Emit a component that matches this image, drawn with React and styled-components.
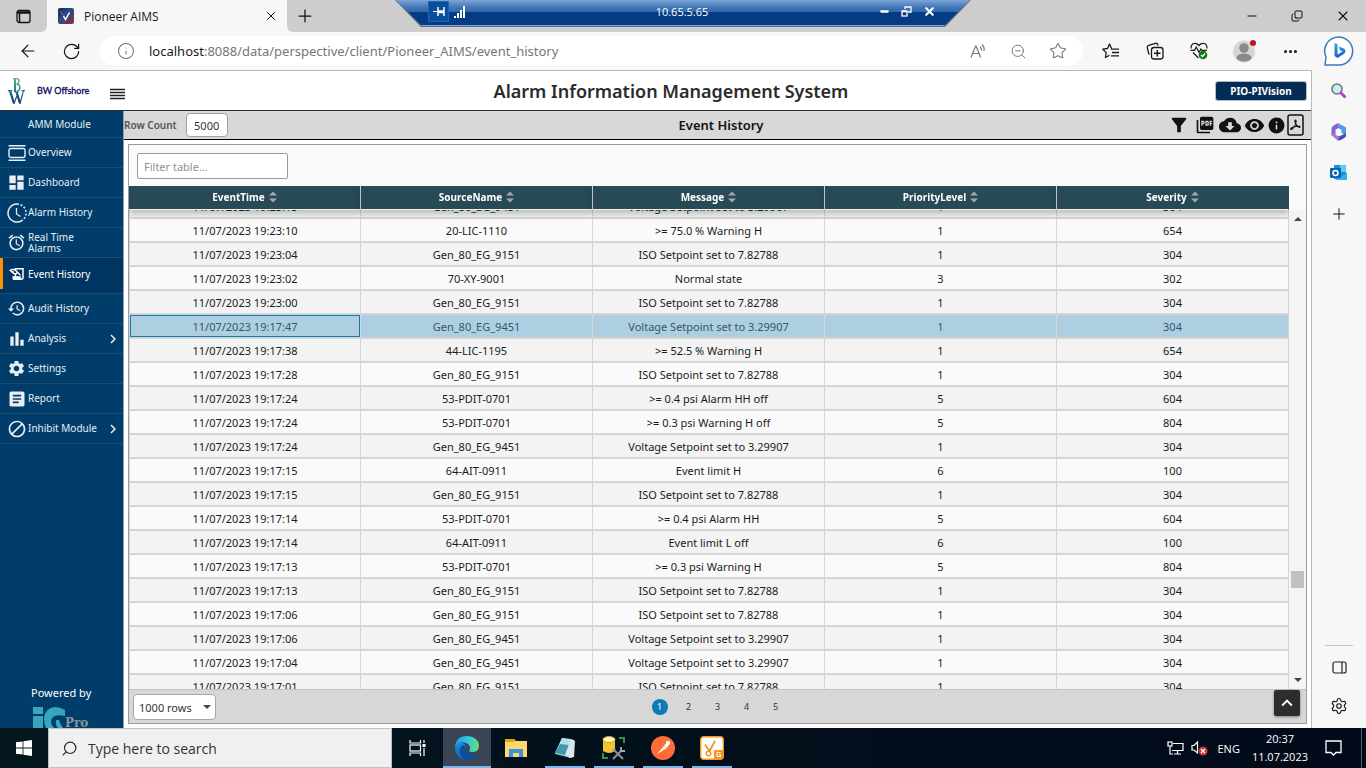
import React, { useLayoutEffect, useRef } from "react";
import styled, { createGlobalStyle, css } from "styled-components";
import {
  ArrowLeft, RotateCw, X, Plus, Minus, Star, ZoomOut, Ellipsis, Info, Search, Settings as Cog, Copy,
} from "lucide-react";
import {
  MdDashboard, MdAlarm, MdHistoryEdu, MdHistory, MdBarChart, MdSettings, MdArticle, MdBlock, MdChevronRight,
  MdFilterAlt, MdPictureAsPdf, MdCloudDownload, MdVisibility, MdInfo, MdKeyboardArrowUp,
} from "react-icons/md";

const ui = `"Open Sans", "Noto Sans", sans-serif`;
const app = `"Noto Sans", "Open Sans", sans-serif`;

const Global = createGlobalStyle`
  *, *::before, *::after { box-sizing: border-box; }
  body { margin: 0; background: #fff; font-family: ${app}; }
  button, input, select { font: inherit; color: inherit; margin: 0; }
  button { border: 0; background: none; padding: 0; cursor: pointer; }
  svg { display: block; flex: none; }
  a { color: inherit; text-decoration: none; }
`;

const Desktop = styled.div`
  display: flex;
  flex-direction: column;
  height: 100vh;
  overflow: hidden;
`;

/* ---------- Browser ---------- */
const TabStrip = styled.div`
  position: relative;
  display: flex;
  flex: none;
  height: 32px;
  background: #f7f7f7;
  font-family: ${ui};
  color: #1b1b1b;
`;
const StripStart = styled.div`
  width: 47px;
  display: grid;
  place-items: center;
  background: #cdcdcd;
  border-radius: 0 0 6px 0;
`;
const Tab = styled.div`
  width: 240px;
  display: flex;
  align-items: center;
  gap: 10px;
  padding: 0 9px 0 11px;
  background: #f7f7f7;
  border-radius: 6px 6px 0 0;
  font-size: 12px;
`;
const TabTitle = styled.span`
  flex: 1;
`;
const StripRest = styled.div`
  flex: 1;
  display: flex;
  align-items: center;
  justify-content: space-between;
  padding: 0 15px 0 8px;
  background: #cdcdcd;
  border-radius: 0 0 0 6px;
`;
const WindowButtons = styled.div`
  display: flex;
  align-items: center;
  gap: 32px;
`;
const IconButton = styled.button`
  display: grid;
  place-items: center;
  width: ${(p) => (p.$w ? `${p.$w}px` : "auto")};
  color: ${(p) => p.$color || "#111"};
`;
const RemoteBar = styled.div`
  position: absolute;
  top: 0;
  left: 50%;
  width: 576px;
  height: 27px;
  transform: translateX(-50%);
  background: #5c6b80;
  clip-path: polygon(0 0, 100% 0, calc(100% - 26px) 100%, 26px 100%);
  color: #fff;
`;
const RemoteFill = styled.div`
  display: grid;
  grid-template-columns: 1fr auto 1fr;
  align-items: center;
  height: 26px;
  padding: 0 35px 2px 33px;
  border-bottom: 1px solid #7fa3d8;
  clip-path: polygon(1px 0, calc(100% - 1px) 0, calc(100% - 27px) 100%, 27px 100%);
  background: linear-gradient(#7ba5d8 0, #5d8cc4 4px, #3d74b4 8px, #3069ad 12px, #053b82 12px, #053b82 100%);
  font-size: 11px;
`;
const RemoteGroup = styled.div`
  display: flex;
  align-items: center;
  justify-content: ${(p) => (p.$end ? "flex-end" : "flex-start")};
  gap: ${(p) => (p.$end ? "11px" : "5px")};
`;
const PinButton = styled.button`
  width: 21px;
  height: 21px;
  display: grid;
  place-items: center;
  background: #0a4f9e;
  border: 1px solid #1c64b8;
`;

const Toolbar = styled.div`
  display: flex;
  align-items: center;
  flex: none;
  height: 38px;
  padding: 0 11px 0 18px;
  background: #f7f7f7;
  font-family: ${app};
`;
const NavButtons = styled.div`
  display: flex;
  gap: 24px;
  width: 82px;
`;
const AddressBar = styled.div`
  flex: 1;
  display: flex;
  align-items: center;
  gap: 14px;
  height: 30px;
  padding: 0 16px 0 17px;
  border-radius: 15px;
  background: #fff;
  color: #767676;
`;
const AddressText = styled.div`
  flex: 1;
  font-size: 13px;
  b { font-weight: 400; color: #1b1b1b; }
`;
const AddressTools = styled.div`
  display: flex;
  align-items: center;
  gap: 22px;
`;
const BrowserTools = styled.div`
  display: flex;
  align-items: center;
  gap: 24px;
  padding-left: 18px;
`;
const ToolSlot = styled.button`
  width: ${(p) => p.$w || 20}px;
  display: grid;
  place-items: center;
  color: #1b1b1b;
`;

const Main = styled.div`
  display: flex;
  flex: 1;
  min-height: 0;
`;
const EdgeSidebar = styled.aside`
  flex: none;
  width: 54px;
  display: flex;
  flex-direction: column;
  align-items: center;
  gap: 23px;
  padding: 12px 0 13px;
  background: #f7f7f7;
`;
const EdgeSpacer = styled.div`
  flex: 1;
`;
const EdgeRule = styled.div`
  width: 28px;
  height: 1px;
  background: #c4c4c4;
  margin-bottom: -8px;
`;

/* ---------- Application ---------- */
const Page = styled.div`
  flex: 1;
  min-width: 0;
  display: flex;
  flex-direction: column;
  background: #fff;
  border-top: 1px solid #b9b9b9;
  border-right: 1px solid #b9b9b9;
`;
const AppHeader = styled.header`
  flex: none;
  display: grid;
  grid-template-columns: 1fr auto 1fr;
  align-items: center;
  height: 40px;
  padding: 0 4px 0 7px;
  border-bottom: 1px solid #2e2e2e;
  h1 { margin: 0; padding-left: 28px; font-size: 18px; line-height: 24px; font-weight: 600; color: #2b2b2b; }
`;
const Brand = styled.div`
  display: flex;
  align-items: center;
  gap: 11px;
`;
const BrandName = styled.span`
  width: 62px;
  color: #0d0d5c;
  font: 9px/14px Lato, sans-serif;
  -webkit-text-stroke: 0.3px #0d0d5c;
`;
const MenuButton = styled(IconButton)`
  padding-top: 6px;
`;
const VisionButton = styled.button`
  justify-self: end;
  width: 92px;
  height: 20px;
  border-radius: 3px;
  border: 1px solid #b4bcc6;
  background: #042c55;
  color: #fff;
  font-size: 10px;
  line-height: 16px;
  font-weight: 700;
`;
const AppBody = styled.div`
  flex: 1;
  min-height: 0;
  display: flex;
`;
const Nav = styled.nav`
  flex: none;
  width: 124px;
  display: flex;
  flex-direction: column;
  overflow: hidden;
  background: #013d6a;
  border-right: 1px solid #8aa0b0;
  color: #e8eef2;
  font-size: 10px;
  line-height: 11px;
`;
const NavTitle = styled.div`
  height: 27px;
  padding: 8px 0 0 28px;
  border-bottom: 1px solid #1d4d6c;
`;
const NavItem = styled.a`
  display: flex;
  align-items: center;
  flex: none;
  height: 30px;
  gap: 2px;
  padding: 0 1px 0 7px;
  border-bottom: 1px solid #1d4d6c;
  ${(p) => p.$active && css`
    height: 36px;
    padding-bottom: 3px;
    background: linear-gradient(#ff9100, #ff9100) 0 0 / 3px 31px no-repeat #003561;
    color: #fff;
  `}
`;
const NavIcon = styled.span`
  width: 19px;
  display: grid;
  place-items: center;
`;
const NavLabel = styled.span`
  width: 72px;
  margin-right: auto;
`;
const NavFooter = styled.div`
  margin-top: auto;
  padding-left: 31px;
  color: #fff;
  font-size: 11px;
  line-height: 16px;
  svg { margin-top: 6px; }
`;
const Content = styled.main`
  flex: 1;
  min-width: 0;
  display: flex;
  flex-direction: column;
`;
const SubHeader = styled.div`
  flex: none;
  display: grid;
  grid-template-columns: 1fr auto 1fr;
  align-items: center;
  height: 29px;
  padding-right: 7px;
  background: #d8d8d8;
  border-bottom: 1px solid #000;
  h2 { margin: 0; padding-left: 14px; font-size: 13px; line-height: 18px; font-weight: 600; color: #111; }
`;
const RowCount = styled.label`
  display: flex;
  align-items: center;
  gap: 9px;
  font-size: 10px;
  font-weight: 600;
  color: #555;
  input {
    width: 42px;
    height: 24px;
    padding: 0;
    text-align: center;
    border: 1px solid #a0a0a0;
    border-radius: 4px;
    background: #fff;
    color: #333;
    font-size: 11px;
    font-weight: 400;
  }
`;
const Actions = styled.div`
  display: flex;
  align-items: center;
  justify-content: flex-end;
  gap: 2px;
`;
const Panel = styled.section`
  flex: 1;
  min-height: 0;
  display: flex;
  flex-direction: column;
  margin: 4px;
  border: 1px solid #9b9b9b;
  background: #fafafa;
`;
const FilterRow = styled.div`
  flex: none;
  padding: 8px 8px 7px;
  input {
    display: block;
    width: 151px;
    height: 26px;
    padding: 0 6px;
    border: 1px solid #9b9b9b;
    border-radius: 2px;
    background: #fff;
    font-size: 11px;
    &::placeholder { color: #919191; opacity: 1; }
  }
`;
const TableArea = styled.div`
  flex: 1;
  min-height: 0;
  display: flex;
  background: #fafafa;
`;
const Scroller = styled.div`
  flex: 1;
  min-width: 0;
  overflow: hidden;
`;
const Table = styled.table`
  width: 100%;
  table-layout: fixed;
  border-collapse: separate;
  border-spacing: 0;
  font-size: 11px;
  line-height: 16px;
  color: #1a1a1a;
  text-align: center;
`;
const Th = styled.th`
  position: sticky;
  top: 0;
  height: 24px;
  padding: 0 0 1px;
  background: #274a56;
  color: #fff;
  font-size: 10px;
  font-weight: 700;
  line-height: 14px;
  border-right: 1px solid #d5d5d5;
  border-bottom: 1px solid #f0f0f0;
  box-shadow: 0 4px 6px rgba(0, 0, 0, 0.22);
  &:last-child { border-right-color: #274a56; }
`;
const SortLabel = styled.button`
  display: inline-flex;
  align-items: center;
  gap: 4px;
  vertical-align: top;
`;
const Row = styled.tr`
  background: ${(p) => (p.$selected ? "#aecfe2" : p.$odd ? "#f3f3f3" : "#fafafa")};
  color: ${(p) => (p.$selected ? "#35566b" : "#1a1a1a")};
`;
const Td = styled.td`
  height: 24px;
  padding: 2px 0 0;
  border-right: 1px solid #d5d5d5;
  border-bottom: 2px solid #d5d5d5;
  &:first-child { border-left: 1px solid #d5d5d5; }
`;
const FocusedTd = styled(Td)`
  box-shadow: inset 0 0 0 1px #0b7bb5;
`;
const ScrollTrack = styled.div`
  flex: none;
  width: 17px;
  display: flex;
  flex-direction: column;
  align-items: center;
  margin-top: 24px;
  padding: 7px 0;
  background: #f4f4f4;
`;
const ScrollGap = styled.div`
  flex: ${(p) => p.$grow};
`;
const ScrollThumb = styled.div`
  width: 13px;
  height: 17px;
  background: #c1c1c1;
`;
const Pager = styled.div`
  flex: none;
  display: grid;
  grid-template-columns: 1fr auto 1fr;
  align-items: center;
  height: 34px;
  padding: 0 6px 0 4px;
  background: #d7d7d7;
  border-top: 1px solid #c2c2c2;
`;
const SelectBox = styled.div`
  display: grid;
  width: 83px;
  align-items: center;
  & > * { grid-area: 1 / 1; }
  select {
    appearance: none;
    width: 100%;
    height: 26px;
    padding: 0 5px;
    border: 1px solid #a6a6a6;
    border-radius: 4px;
    background: #fff;
    color: #333;
    font-size: 11px;
  }
  svg { justify-self: end; margin-right: 5px; pointer-events: none; }
`;
const Pages = styled.div`
  display: flex;
  gap: 13px;
  padding-left: 2px;
`;
const PageButton = styled.button`
  width: 16px;
  height: 16px;
  border-radius: 50%;
  font-size: 9px;
  line-height: 16px;
  color: ${(p) => (p.$current ? "#fff" : "#333")};
  background: ${(p) => (p.$current ? "#0b7bb5" : "transparent")};
`;
const TopButton = styled.button`
  justify-self: end;
  width: 26px;
  height: 26px;
  display: grid;
  place-items: center;
  margin-bottom: 8px;
  border-radius: 2px;
  background: #2d2d30;
  color: #fff;
  box-shadow: 0 1px 3px rgba(0, 0, 0, 0.4);
`;

/* ---------- Taskbar ---------- */
const Taskbar = styled.footer`
  flex: none;
  display: flex;
  height: 40px;
  background: linear-gradient(90deg, #03161d, #020a1a);
  font-family: ${ui};
  color: #fff;
`;
const StartButton = styled.button`
  width: 48px;
  display: grid;
  place-items: center;
`;
const SearchBox = styled.label`
  width: 344px;
  display: flex;
  align-items: center;
  gap: 10px;
  padding: 0 12px;
  background: #f0f0f0;
  border: 1px solid #c0c0c0;
  color: #222;
  input {
    flex: 1;
    min-width: 0;
    border: 0;
    padding: 0;
    background: none;
    font-size: 14px;
    &::placeholder { color: #333; opacity: 1; }
  }
`;
const TaskIcons = styled.div`
  flex: 1;
  display: flex;
  gap: 1px;
`;
const TaskIcon = styled.button`
  width: ${(p) => p.$w || 48}px;
  display: grid;
  place-items: center;
  background: ${(p) => (p.$active ? "#3a4555" : "none")};
  background-image: ${(p) => (p.$running || p.$active ? "linear-gradient(#76b9ed, #76b9ed)" : "none")};
  background-repeat: no-repeat;
  background-position: bottom;
  background-size: ${(p) => (p.$active ? "48px" : "40px")} 2px;
`;
const Tray = styled.div`
  display: flex;
  align-items: center;
  font-size: 11px;
  padding-right: 4px;
`;
const TrayIcons = styled.div`
  display: flex;
  align-items: center;
  gap: 7px;
  margin-right: 9px;
`;
const Clock = styled.div`
  margin: 0 17px 0 12px;
  text-align: center;
  line-height: 18px;
`;
const TrayEnd = styled.div`
  height: 40px;
  margin-left: 19px;
  border-left: 1px solid #56606c;
`;

/* ---------- Drawings ---------- */
const TabsGlyph = () => (
  <svg width="15" height="15" viewBox="0 0 15 15" fill="none" stroke="#111" strokeWidth="1.3">
    <rect x="1" y="1.5" width="13" height="12" rx="2" /><path d="M1 3.500h13" strokeWidth="2.500" /><path d="M3.500 4v9" strokeWidth="1.500" />
  </svg>
);
const Favicon = () => (
  <svg width="16" height="16" viewBox="0 0 16 16">
    <defs><linearGradient id="fav" x2="1" y2="1"><stop stopColor="#0c2c55" /><stop offset=".45" stopColor="#28508a" /><stop offset=".7" stopColor="#5b3a5e" /><stop offset="1" stopColor="#a5301f" /></linearGradient></defs>
    <rect width="16" height="16" rx="2" fill="url(#fav)" /><path d="M5.500 8l2 3.500 4-7" fill="none" stroke="#fff" strokeWidth="1.500" />
    <path d="M2 3l3.500 4.500" stroke="#c9574e" />
  </svg>
);
const ReadAloud = () => (
  <svg width="18" height="16" viewBox="0 0 18 16" fill="none" stroke="currentColor" strokeWidth="1.200">
    <path d="M1 14.500L5.500 3h.6l4.500 11.500M2.700 10.500h6.200M10 3.500q1.700 1.500 1.500 4M12 1.500q2.700 2.500 2 6.500" />
  </svg>
);
const StarLines = () => (
  <svg width="18" height="16" viewBox="0 0 18 16" fill="none" stroke="currentColor" strokeWidth="1.300" strokeLinejoin="round">
    <path d="M9.500 5.500L7.500 1 5.500 5.500.8 6.200 4.200 9.600 3.400 14.500 7.500 12.200M9 6.200h8M10 9.500h7M9 12.800h8" />
  </svg>
);
const Collections = () => (
  <svg width="18" height="18" viewBox="0 0 18 18" fill="none" stroke="currentColor" strokeWidth="1.300">
    <path d="M3.500 12.500Q2.800 12 2.600 11L1.200 5.500Q1 4 2.500 3.300l7-2q1.700-.3 2.200 1.200l.3 1" /><rect x="5.500" y="5.500" width="11.500" height="11.500" rx="2.500" /><path d="M11.300 8v6.500M8 11.300h6.500" strokeWidth="1.500" />
  </svg>
);
const Heart = () => (
  <svg width="18" height="18" viewBox="0 0 18 18" fill="none" stroke="currentColor" strokeWidth="1.200">
    <path d="M1.200 6.500Q.5 3.500 3 1.800 6.500.5 9 3.500 11.500.5 15 1.800 17.500 3.500 16.800 6.500M.5 8.300h4l1.800-3.300 2.700 5.500 1.800-3.500 1.200 1.300H17M3 10.500l5.500 5.500" />
    <circle cx="13" cy="13" r="4.300" fill="#107c10" stroke="none" /><path d="M11 13l1.500 1.500 2.500-3" stroke="#fff" />
  </svg>
);
const Avatar = () => (
  <svg width="24" height="24" viewBox="0 0 24 24">
    <circle cx="11" cy="12.500" r="11" fill="#d8d6d4" /><circle cx="11" cy="9" r="4.800" fill="#8b8987" /><ellipse cx="11" cy="18.500" rx="7.500" ry="4" fill="#8b8987" /><circle cx="20" cy="4" r="3" fill="#c50f1f" />
  </svg>
);
const Bing = () => (
  <svg width="32" height="32" viewBox="0 0 32 32">
    <defs><linearGradient id="bing" x2="0" y2="1"><stop stopColor="#2cb5df" /><stop offset="1" stopColor="#2355c7" /></linearGradient></defs>
    <path d="M2 30l1-8A14 14 0 1 1 16 30Z" fill="#fff" stroke="#3c79bc" strokeWidth="1.500" strokeLinejoin="round" />
    <path d="M11.500 8l3 1v10.500l5-3-2.500-1.300-1.500-3.700 6 2.200q2 2.300 0 4.800l-7 4.500-3-2z" fill="url(#bing)" />
  </svg>
);
const SideSearch = () => (
  <svg width="18" height="18" viewBox="0 0 18 18"><path d="M10.500 10.500l5 5" stroke="#c43bdc" strokeWidth="3" /><circle cx="7" cy="7" r="5" fill="#cfe8f6" stroke="#6d7780" strokeWidth="1.600" /></svg>
);
const M365 = () => (
  <svg width="18" height="18" viewBox="0 0 18 18">
    <path d="M8 0l8 4.500v7.500l-4.500-2V7L9 5.500z" fill="#4f9be8" /><path d="M8 0Q2 3 1.500 5v7l4 2V6.500L9 5z" fill="#8a63d2" /><path d="M1.500 12L8 17.500q3 .5 8-4V10l-7 3.500-3.500-1z" fill="#4b4fb5" /><path d="M1.500 9v3L8 17l1.500-3.500L5.500 12z" fill="#a678de" />
  </svg>
);
const Outlook = () => (
  <svg width="18" height="18" viewBox="0 0 18 18">
    <rect x="4" y="1" width="12" height="14" rx="1" fill="#1b8ed8" /><rect x="10" y="1" width="6" height="7" fill="#5bcaf5" /><path d="M5 16l12-7v7z" fill="#2fb0ea" /><rect x="0" y="4" width="11" height="10" rx="1" fill="#0a62b8" /><circle cx="5.500" cy="9" r="2.500" fill="none" stroke="#fff" strokeWidth="1.500" />
  </svg>
);
const PanelGlyph = () => (
  <svg width="15" height="13" viewBox="0 0 15 13" fill="none" stroke="#222" strokeWidth="1.200"><rect x="1" y="1" width="13" height="11" rx="2" /><path d="M10 1v11" /></svg>
);
const BwLogo = () => (
  <svg width="19" height="28" viewBox="0 0 19 28">
    <defs><linearGradient id="bw" x2="0" y2="28" gradientUnits="userSpaceOnUse"><stop stopColor="#62b893" /><stop offset=".4" stopColor="#1f8a80" /><stop offset=".6" stopColor="#155b80" /><stop offset="1" stopColor="#1c2f78" /></linearGradient></defs>
    <g fill="none" stroke="url(#bw)">
      <path d="M8 1.500V15" strokeWidth="2" />
      <path d="M6 1.600h4q2.500.6 2 3-.4 1.800-2.500 2.400 3.500.4 3.500 3.800-.3 3-3.500 3.600" strokeWidth="1.300" />
      <path d="M.8 13.600h4.500M8 15.200h3.500M14.500 13.600h3.500" strokeWidth="1.100" />
      <path d="M3 13.600L7 26.500M9.800 15.500L13 26.500" strokeWidth="2.200" />
      <path d="M7 26.500l3-8M13 26.500l3.500-12.800" strokeWidth="1.100" />
    </g>
  </svg>
);
const MenuGlyph = () => (
  <svg width="15" height="12" viewBox="0 0 15 12" stroke="#222" strokeWidth="1.300"><path d="M0 1.500h15M0 4.500h15M0 7.500h15M0 10.500h15" /></svg>
);
const OverviewGlyph = () => (
  <svg width="18" height="18" viewBox="0 0 18 18" fill="none" stroke="currentColor" strokeWidth="1.400"><path d="M.5 1.700h17M.5 16.300h17" /><rect x="1" y="4.500" width="16" height="9" rx="2" /></svg>
);
const AlarmHistoryGlyph = () => (
  <svg width="20" height="20" viewBox="0 0 20 20" fill="none" stroke="currentColor" strokeWidth="1.500"><path d="M10 1a9 9 0 1 0 5 16.500" /><path d="M10 1a9 9 0 0 1 5 16.500" strokeDasharray="2 1.600" /><path d="M9.500 5v6l4 2.500" strokeWidth="1.300" /></svg>
);
const AcrobatGlyph = () => (
  <svg width="17" height="22" viewBox="0 0 17 22" fill="none" stroke="#111"><rect x="1" y="1" width="15" height="20" rx="2" strokeWidth="1.500" /><path d="M8.200 6q1.200 0 .9 2-.6 4.500-4.600 7.500-1.200.2-.6-1.200 3.500-2.500 8.600-2 1 .5.200 1.100Q10 13 8.200 8.500q-.7-2.300 0-2.500" strokeWidth="1.100" /></svg>
);
const IcProLogo = () => (
  <svg width="62" height="21" viewBox="0 0 62 21">
    <path d="M2 0h10v7H2zM2 9h10v12H2z" fill="#38a4bd" />
    <path d="M34 9V3Q29 0 24 0 14 1 13 11q0 6 2 10h8q-3-3-3-7 1-5 6-5.500Q30 8 34 9zM25 13q4-1 4 3l3 5h-5q-3-3-2-8z" fill="#38a4bd" />
    <text x="34" y="20" fontFamily="DejaVu Serif, serif" fontWeight="700" fontSize="12" fill="#8b9599">Pro</text>
  </svg>
);
const SortGlyph = () => (
  <svg width="8" height="12" viewBox="0 0 8 12" fill="#a3a9ac"><path d="M0 4.500L4 .5l4 4zM0 7.500l4 4 4-4z" /></svg>
);
const Caret = ({ up }) => (
  <svg width="8" height="4" viewBox="0 0 8 4" fill="#444"><path d={up ? "M0 4l4-4 4 4z" : "M0 0h8L4 4z"} /></svg>
);
const WindowsLogo = () => (
  <svg width="16" height="16" viewBox="0 0 16 16" fill="#fff"><path d="M0 2.300L6.600 1.400v6.200H0zM7.400 1.300L16 0v7.600H7.400zM0 8.400h6.600v6.200L0 13.700zM7.400 8.400H16V16l-8.600-1.300z" /></svg>
);
const TaskView = () => (
  <svg width="17" height="16" viewBox="0 0 17 16" fill="none" stroke="#fff" strokeWidth="1.200"><path d="M1 0v3h10.500V0M1 16v-3h10.500v3M15 0v3M15 8v8" /><rect x="1" y="5" width="10.500" height="6" /><rect x="14" y="4.500" width="2" height="2" fill="#fff" strokeWidth="1" /></svg>
);
const EdgeLogo = () => (
  <svg width="24" height="24" viewBox="0 0 24 24">
    <defs>
      <linearGradient id="eg1" x2="1"><stop stopColor="#1c9be0" /><stop offset=".6" stopColor="#36c8e0" /><stop offset="1" stopColor="#6be05e" /></linearGradient>
      <linearGradient id="eg2" x2="0" y2="1"><stop stopColor="#1b8ce0" /><stop offset="1" stopColor="#0f62b5" /></linearGradient>
    </defs>
    <path d="M0 11q0 6 3.500 9.500Q7 24 12 24q7 0 10.500-6-4 2.500-8.500.5-3.500-2-3.200-6Q11 7 6 6.500 1 7 0 11z" fill="url(#eg2)" />
    <path d="M8 9Q4 12 5 17q1.500 5 6 7 7 .5 11-5.500.4-.8-.5-.5-4 1.700-7.500.3-3.500-2-3.200-6.300Q10.500 9.500 8 9z" fill="#0c4f9a" />
    <path d="M0 11Q1 0 12 0q11 .5 12 9.500 0 6-6 6.500-4 0-4-1.500 2-2 0-5.500Q11 5.500 6 6.500 2 7.500 0 11z" fill="url(#eg1)" />
  </svg>
);
const Folder = () => (
  <svg width="22" height="19" viewBox="0 0 22 19"><path d="M0 0h9l2 2h11v16H0z" fill="#ffd86b" /><path d="M0 0h9l1 3H0z" fill="#e5a50a" /><path d="M4 18v-8h14v8h-4v-4H8v4z" fill="#3a94dd" /></svg>
);
const Notepad = () => (
  <svg width="24" height="24" viewBox="0 0 24 24"><path d="M9 2l12 2-3 18-16-4z" fill="#8cc8d6" /><path d="M9 2l9 1-6 16-10-2z" fill="#b5e0e8" /><path d="M7 8l9 1-4 10-10-2z" fill="#3e98ae" /><path d="M18 3l4 2-1 16-4 1-5-3z" fill="#dce6ea" /></svg>
);
const Database = () => (
  <svg width="24" height="24" viewBox="0 0 24 24"><path d="M1 3v12q6 4 12 0V3z" fill="#f5c32c" /><ellipse cx="7" cy="3.500" rx="6" ry="3" fill="#fff4c4" stroke="#d79c14" /><path d="M17 2h5v5M1 17v5h5" fill="none" stroke="#3c8f48" strokeWidth="2" /><path d="M12 14l9 9M20 14l-9 9" stroke="#8e9396" strokeWidth="2" /><path d="M19 11v4h4M10 15l3-3" stroke="#a6aaad" strokeWidth="1.800" fill="none" /></svg>
);
const Postman = () => (
  <svg width="24" height="24" viewBox="0 0 24 24"><circle cx="12" cy="12" r="12" fill="#ff6c37" /><path d="M6 18l7-8 2.500 2.200z" fill="#fff" /><path d="M13 9l3-1.500 1.500 2L15.500 12z" fill="#fff" /><circle cx="17" cy="7" r="2.200" fill="#fff" /></svg>
);
const Designer = () => (
  <svg width="24" height="24" viewBox="0 0 24 24"><rect x=".7" y=".7" width="22.600" height="22.600" rx="3" fill="#fff" stroke="#f7941d" strokeWidth="1.400" /><path d="M5 8.500l4.500 6.500L15 5" fill="none" stroke="#f7941d" strokeWidth="1.800" /><circle cx="8.500" cy="17.500" r="2.300" fill="#fff" stroke="#f7941d" strokeWidth="1.500" /><rect x="14" y="14" width="9" height="9" rx="1" fill="#f7941d" /><path d="M20.500 16.500h-3.500v4h3.500v-2h-1.500" fill="none" stroke="#fff" /></svg>
);
const Network = () => (
  <svg width="17" height="14" viewBox="0 0 17 14" fill="none" stroke="#fff" strokeWidth="1.200"><path d="M6 2.500h10v7H5M10.500 9.500v3.500M7 13h7M3 5.500V13h3" /><rect x="1" y="1" width="4" height="4" /></svg>
);
const Volume = () => (
  <svg width="17" height="15" viewBox="0 0 17 15" fill="none"><path d="M1 4.500h2L6.500 1v11L3 9H1z" stroke="#fff" strokeWidth="1.200" /><circle cx="12" cy="10" r="4.500" fill="#d13438" /><path d="M10 8l4 4M14 8l-4 4" stroke="#fff" strokeWidth="1.200" /></svg>
);
const Notifications = () => (
  <svg width="17" height="17" viewBox="0 0 17 17" fill="none" stroke="#fff" strokeWidth="1.300"><path d="M1 1h15v11.500h-5L8.500 15 6 12.500H1z" /></svg>
);
const Signal = () => (
  <svg width="12" height="12" viewBox="0 0 12 12" fill="#fff"><path d="M0 10h2v2H0zM3 7h2v5H3zM6 4h2v8H6zM9 0h2v12H9z" /></svg>
);
const Pin = () => (
  <svg width="12" height="9" viewBox="0 0 12 9" fill="none" stroke="#fff"><path d="M0 4.500h5" strokeWidth="1" /><path d="M5 0v9M11 0v9M5 4h6M5 5.500h6" strokeWidth="1.500" /></svg>
);
const RemoteRestore = () => (
  <svg width="11" height="11" viewBox="0 0 11 11" fill="none" stroke="#fff" strokeWidth="1.300"><path d="M4 3V1h6v5H7" /><rect x="1" y="5" width="5" height="5" /><path d="M1 5.500h5" /></svg>
);

/* ---------- Data ---------- */
const navItems = [
  ["Overview", <OverviewGlyph />],
  ["Dashboard", <MdDashboard size={19} />],
  ["Alarm History", <AlarmHistoryGlyph />],
  ["Real Time Alarms", <MdAlarm size={19} />],
  ["Event History", <MdHistoryEdu size={18} />],
  ["Audit History", <MdHistory size={19} />],
  ["Analysis", <MdBarChart size={20} />, true],
  ["Settings", <MdSettings size={19} />],
  ["Report", <MdArticle size={20} />],
  ["Inhibit Module", <MdBlock size={20} />, true],
];
const columns = ["EventTime", "SourceName", "Message", "PriorityLevel", "Severity"];
const V = "Voltage Setpoint set to 3.29907";
const I = "ISO Setpoint set to 7.82788";
const G4 = "Gen_80_EG_9451";
const G1 = "Gen_80_EG_9151";
const events = [
  ["19:23:13", G4, V, 1, 304],
  ["19:23:10", "20-LIC-1110", ">= 75.0 % Warning H", 1, 654],
  ["19:23:04", G1, I, 1, 304],
  ["19:23:02", "70-XY-9001", "Normal state", 3, 302],
  ["19:23:00", G1, I, 1, 304],
  ["19:17:47", G4, V, 1, 304],
  ["19:17:38", "44-LIC-1195", ">= 52.5 % Warning H", 1, 654],
  ["19:17:28", G1, I, 1, 304],
  ["19:17:24", "53-PDIT-0701", ">= 0.4 psi Alarm HH off", 5, 604],
  ["19:17:24", "53-PDIT-0701", ">= 0.3 psi Warning H off", 5, 804],
  ["19:17:24", G4, V, 1, 304],
  ["19:17:15", "64-AIT-0911", "Event limit H", 6, 100],
  ["19:17:15", G1, I, 1, 304],
  ["19:17:14", "53-PDIT-0701", ">= 0.4 psi Alarm HH", 5, 604],
  ["19:17:14", "64-AIT-0911", "Event limit L off", 6, 100],
  ["19:17:13", "53-PDIT-0701", ">= 0.3 psi Warning H", 5, 804],
  ["19:17:13", G1, I, 1, 304],
  ["19:17:06", G1, I, 1, 304],
  ["19:17:06", G4, V, 1, 304],
  ["19:17:04", G4, V, 1, 304],
  ["19:17:01", G1, I, 1, 304],
];
const selectedIndex = 5;

function Browser() {
  return (
    <>
      <TabStrip>
        <StripStart><IconButton aria-label="Tab actions"><TabsGlyph /></IconButton></StripStart>
        <Tab>
          <Favicon />
          <TabTitle>Pioneer AIMS</TabTitle>
          <IconButton aria-label="Close tab"><X size={14} strokeWidth={1.7} /></IconButton>
        </Tab>
        <StripRest>
          <IconButton aria-label="New tab"><Plus size={20} strokeWidth={1.5} /></IconButton>
          <WindowButtons>
            <IconButton aria-label="Minimize"><Minus size={14} strokeWidth={1.7} /></IconButton>
            <IconButton aria-label="Restore"><Copy size={12} strokeWidth={2} transform="scale(1 -1)" /></IconButton>
            <IconButton aria-label="Close"><X size={16} strokeWidth={1.7} /></IconButton>
          </WindowButtons>
        </StripRest>
        <RemoteBar>
          <RemoteFill>
            <RemoteGroup><PinButton aria-label="Pin"><Pin /></PinButton><Signal /></RemoteGroup>
            <span>10.65.5.65</span>
            <RemoteGroup $end>
              <IconButton $color="#fff" aria-label="Minimize session"><Minus size={11} strokeWidth={5} /></IconButton>
              <IconButton aria-label="Restore session"><RemoteRestore /></IconButton>
              <IconButton $color="#fff" aria-label="Close session"><X size={13} strokeWidth={4} /></IconButton>
            </RemoteGroup>
          </RemoteFill>
        </RemoteBar>
      </TabStrip>
      <Toolbar>
        <NavButtons>
          <IconButton aria-label="Back"><ArrowLeft size={20} strokeWidth={1.4} /></IconButton>
          <IconButton aria-label="Refresh"><RotateCw size={19} strokeWidth={1.5} /></IconButton>
        </NavButtons>
        <AddressBar>
          <Info size={18} strokeWidth={1.4} />
          <AddressText><b>localhost</b>:8088/data/perspective/client/Pioneer_AIMS/event_history</AddressText>
          <AddressTools>
            <ReadAloud /><ZoomOut size={17} strokeWidth={1.4} /><Star size={18} strokeWidth={1.4} />
          </AddressTools>
        </AddressBar>
        <BrowserTools>
          <ToolSlot aria-label="Favorites"><StarLines /></ToolSlot>
          <ToolSlot aria-label="Collections"><Collections /></ToolSlot>
          <ToolSlot aria-label="Browser essentials"><Heart /></ToolSlot>
          <ToolSlot $w={24} aria-label="Profile"><Avatar /></ToolSlot>
          <ToolSlot $w={18} aria-label="More"><Ellipsis size={17} strokeWidth={2.4} /></ToolSlot>
          <ToolSlot $w={32} aria-label="Bing"><Bing /></ToolSlot>
        </BrowserTools>
      </Toolbar>
    </>
  );
}

function EventTable() {
  const scroller = useRef(null);
  useLayoutEffect(() => {
    scroller.current.scrollTop = 15;
  }, []);
  return (
    <TableArea>
      <Scroller ref={scroller}>
        <Table>
          <thead>
            <tr>{columns.map((c) => <Th key={c} scope="col"><SortLabel>{c}<SortGlyph /></SortLabel></Th>)}</tr>
          </thead>
          <tbody>
            {events.map(([time, ...rest], i) => {
              const First = i === selectedIndex ? FocusedTd : Td;
              return (
                <Row key={i} $odd={i % 2 === 0} $selected={i === selectedIndex}>
                  <First>11/07/2023 {time}</First>
                  {rest.map((v, j) => <Td key={j}>{v}</Td>)}
                </Row>
              );
            })}
          </tbody>
        </Table>
      </Scroller>
      <ScrollTrack>
        <Caret up />
        <ScrollGap $grow={351} />
        <ScrollThumb />
        <ScrollGap $grow={90} />
        <Caret />
      </ScrollTrack>
    </TableArea>
  );
}

export default function App() {
  return (
    <Desktop>
      <Global />
      <Browser />
      <Main>
        <Page>
          <AppHeader>
            <Brand>
              <BwLogo />
              <BrandName>BW Offshore</BrandName>
              <MenuButton aria-label="Toggle menu"><MenuGlyph /></MenuButton>
            </Brand>
            <h1>Alarm Information Management System</h1>
            <VisionButton>PIO-PIVision</VisionButton>
          </AppHeader>
          <AppBody>
            <Nav>
              <NavTitle>AMM Module</NavTitle>
              {navItems.map(([label, icon, more]) => (
                <NavItem key={label} href="#" $active={label === "Event History"}>
                  <NavIcon>{icon}</NavIcon>
                  <NavLabel>{label}</NavLabel>
                  {more && <MdChevronRight size={18} />}
                </NavItem>
              ))}
              <NavFooter>Powered by<IcProLogo /></NavFooter>
            </Nav>
            <Content>
              <SubHeader>
                <RowCount>Row Count<input defaultValue="5000" /></RowCount>
                <h2>Event History</h2>
                <Actions>
                  <IconButton $w={24} aria-label="Filter"><MdFilterAlt size={22} /></IconButton>
                  <IconButton $w={24} aria-label="Export PDF"><MdPictureAsPdf size={20} /></IconButton>
                  <IconButton $w={22} aria-label="Download"><MdCloudDownload size={22} /></IconButton>
                  <IconButton $w={22} aria-label="Show columns"><MdVisibility size={21} /></IconButton>
                  <IconButton $w={18} aria-label="Information"><MdInfo size={19} /></IconButton>
                  <IconButton aria-label="Report"><AcrobatGlyph /></IconButton>
                </Actions>
              </SubHeader>
              <Panel>
                <FilterRow><input placeholder="Filter table..." aria-label="Filter table" /></FilterRow>
                <EventTable />
                <Pager>
                  <SelectBox>
                    <select aria-label="Rows per page" defaultValue="1000"><option value="1000">1000 rows</option></select>
                    <Caret />
                  </SelectBox>
                  <Pages>{[1, 2, 3, 4, 5].map((n) => <PageButton key={n} $current={n === 1}>{n}</PageButton>)}</Pages>
                  <TopButton aria-label="Back to top"><MdKeyboardArrowUp size={22} /></TopButton>
                </Pager>
              </Panel>
            </Content>
          </AppBody>
        </Page>
        <EdgeSidebar>
          <IconButton aria-label="Search"><SideSearch /></IconButton>
          <IconButton aria-label="Microsoft 365"><M365 /></IconButton>
          <IconButton aria-label="Outlook"><Outlook /></IconButton>
          <IconButton aria-label="Customize"><Plus size={18} strokeWidth={1.3} /></IconButton>
          <EdgeSpacer />
          <EdgeRule />
          <IconButton aria-label="Hide sidebar"><PanelGlyph /></IconButton>
          <IconButton aria-label="Settings"><Cog size={18} strokeWidth={1.5} /></IconButton>
        </EdgeSidebar>
      </Main>
      <Taskbar>
        <StartButton aria-label="Start"><WindowsLogo /></StartButton>
        <SearchBox>
          <Search size={17} strokeWidth={1.6} transform="scale(-1 1)" />
          <input placeholder="Type here to search" aria-label="Search" />
        </SearchBox>
        <TaskIcons>
          <TaskIcon $w={50} aria-label="Task view"><TaskView /></TaskIcon>
          <TaskIcon $active aria-label="Edge"><EdgeLogo /></TaskIcon>
          <TaskIcon aria-label="Files"><Folder /></TaskIcon>
          <TaskIcon $running aria-label="Notepad"><Notepad /></TaskIcon>
          <TaskIcon $running aria-label="Database tools"><Database /></TaskIcon>
          <TaskIcon $running aria-label="Postman"><Postman /></TaskIcon>
          <TaskIcon $running aria-label="Designer"><Designer /></TaskIcon>
        </TaskIcons>
        <Tray>
          <TrayIcons><Network /><Volume /></TrayIcons>
          ENG
          <Clock>20:37<br />11.07.2023</Clock>
          <Notifications />
          <TrayEnd />
        </Tray>
      </Taskbar>
    </Desktop>
  );
}
